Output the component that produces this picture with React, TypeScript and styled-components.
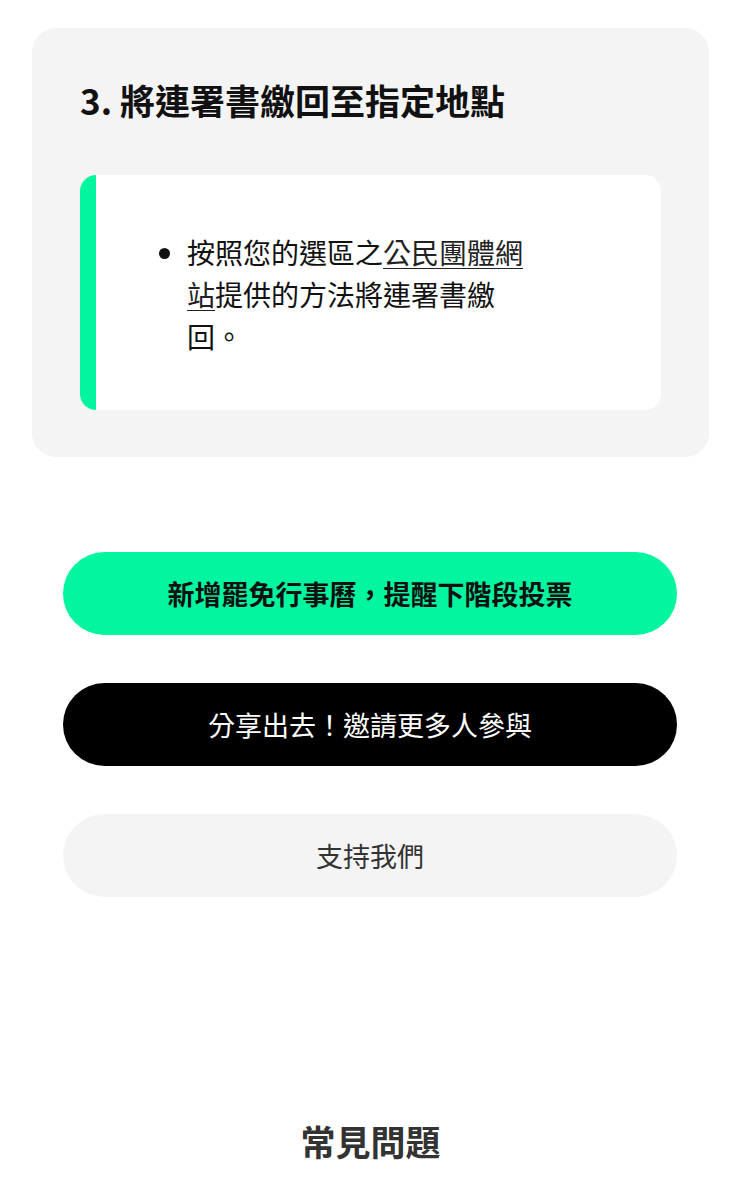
import React from 'react';
import styled, { createGlobalStyle } from 'styled-components';

const GlobalStyle = createGlobalStyle`
  body {
    margin: 0;
    background: #fff;
    font-family: 'Noto Sans CJK TC', 'Noto Sans', sans-serif;
    color: #111;
  }
`;

const Page = styled.div`
  padding: 28px 31px 40px 32px;
`;

const StepCard = styled.section`
  background: #f4f4f4;
  border-radius: 24px;
  padding: 48px 48px 47px;
`;

const StepTitle = styled.h3`
  margin: 0 0 51px;
  font-size: 35px;
  line-height: 48px;
  font-weight: 700;
  color: #111;
`;

const NoteBox = styled.div`
  background: #fff;
  border-left: 16px solid #03f5a0;
  border-radius: 16px;
  padding: 56px 24px 53px 48px;
`;

const NoteList = styled.ul`
  margin: 0;
  padding-left: 43px;
`;

const NoteItem = styled.li`
  max-width: 350px;
  font-size: 28px;
  line-height: 42px;
  color: #111;
`;

const NoteLink = styled.a`
  color: #222;
  text-decoration: underline;
  text-underline-offset: 4px;
  text-decoration-thickness: 1px;
`;

const Actions = styled.div`
  margin-top: 95px;
  padding: 0 32px 0 31px;
  display: flex;
  flex-direction: column;
  gap: 48px;
`;

const ActionButton = styled.button<{ $variant: 'primary' | 'dark' | 'light' }>`
  height: 83px;
  width: 100%;
  border: none;
  border-radius: 999px;
  font-family: 'Noto Sans CJK TC', 'Noto Sans', sans-serif;
  font-size: 27px;
  cursor: pointer;
  background: ${p => (p.$variant === 'primary' ? '#03f5a0' : p.$variant === 'dark' ? '#000' : '#f4f4f4')};
  color: ${p => (p.$variant === 'primary' ? '#111' : p.$variant === 'dark' ? '#fff' : '#333')};
  font-weight: ${p => (p.$variant === 'primary' ? 700 : 400)};
`;

const FaqTitle = styled.h2`
  margin: 220px 0 0;
  text-align: center;
  font-size: 35px;
  line-height: 48px;
  font-weight: 700;
  color: #333;
`;

const App: React.FC = () => (
  <>
    <GlobalStyle />
    <Page>
      <StepCard>
        <StepTitle>3. 將連署書繳回至指定地點</StepTitle>
        <NoteBox>
          <NoteList>
            <NoteItem>
              按照您的選區之<NoteLink href="#">公民團體網站</NoteLink>提供的方法將連署書繳回。
            </NoteItem>
          </NoteList>
        </NoteBox>
      </StepCard>
      <Actions>
        <ActionButton $variant="primary">新增罷免行事曆，提醒下階段投票</ActionButton>
        <ActionButton $variant="dark">分享出去！邀請更多人參與</ActionButton>
        <ActionButton $variant="light">支持我們</ActionButton>
      </Actions>
      <FaqTitle>常見問題</FaqTitle>
    </Page>
  </>
);

export default App;
